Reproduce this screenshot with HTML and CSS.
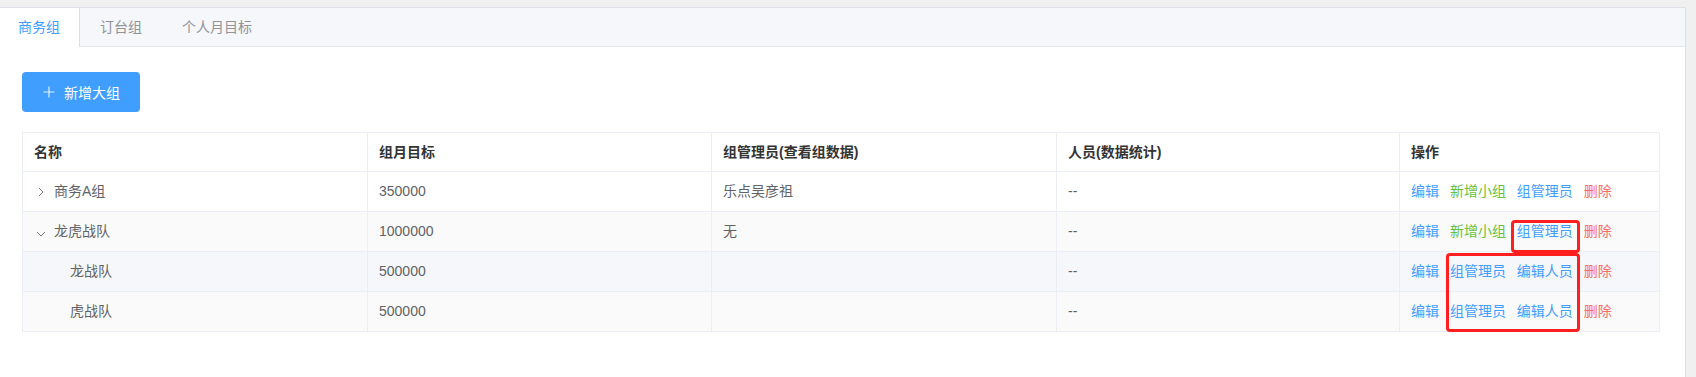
FILE: index.html
```html
<!DOCTYPE html>
<html lang="zh-CN">
<head>
    <meta charset="UTF-8">
    <title>分组管理</title>
    <link rel="stylesheet" href="styles.css">
</head>
<body>
    <div class="card">
        <!-- Tabs -->
        <div class="tabs-header">
            <div class="tab active">商务组</div>
            <div class="tab">订台组</div>
            <div class="tab">个人月目标</div>
        </div>

        <div class="tabs-content">
            <button class="btn-primary">
                <svg class="plus" width="12" height="12" viewBox="0 0 12 12"><path d="M6 0.5V11.5M0.5 6H11.5" stroke="#fff" stroke-width="1.2" fill="none"/></svg>
                <span>新增大组</span>
            </button>

            <!-- Group table -->
            <div class="table-wrap">
                <table class="group-table">
                    <colgroup>
                        <col class="c1"><col class="c2"><col class="c3"><col class="c4"><col class="c5">
                    </colgroup>
                    <thead>
                        <tr>
                            <th>名称</th>
                            <th>组月目标</th>
                            <th>组管理员(查看组数据)</th>
                            <th>人员(数据统计)</th>
                            <th>操作</th>
                        </tr>
                    </thead>
                    <tbody>
                        <tr class="row-white">
                            <td><span class="expand"><svg width="6" height="10" viewBox="0 0 6 10"><polyline points="1,1 5,5 1,9" fill="none" stroke="#777" stroke-width="1"/></svg></span>商务A组</td>
                            <td>350000</td>
                            <td>乐点吴彦祖</td>
                            <td>--</td>
                            <td class="ops">
                                <span class="link blue">编辑</span>
                                <span class="link green">新增小组</span>
                                <span class="link blue">组管理员</span>
                                <span class="link red">删除</span>
                            </td>
                        </tr>
                        <tr class="row-stripe">
                            <td><span class="expand"><svg width="10" height="6" viewBox="0 0 10 6"><polyline points="1,1 5,5 9,1" fill="none" stroke="#777" stroke-width="1"/></svg></span>龙虎战队</td>
                            <td>1000000</td>
                            <td>无</td>
                            <td>--</td>
                            <td class="ops">
                                <span class="link blue">编辑</span>
                                <span class="link green">新增小组</span>
                                <span class="link blue">组管理员</span>
                                <span class="link red">删除</span>
                            </td>
                        </tr>
                        <tr class="row-hover">
                            <td><span class="indent"></span>龙战队</td>
                            <td>500000</td>
                            <td></td>
                            <td>--</td>
                            <td class="ops">
                                <span class="link blue">编辑</span>
                                <span class="link blue">组管理员</span>
                                <span class="link blue">编辑人员</span>
                                <span class="link red">删除</span>
                            </td>
                        </tr>
                        <tr class="row-stripe">
                            <td><span class="indent"></span>虎战队</td>
                            <td>500000</td>
                            <td></td>
                            <td>--</td>
                            <td class="ops">
                                <span class="link blue">编辑</span>
                                <span class="link blue">组管理员</span>
                                <span class="link blue">编辑人员</span>
                                <span class="link red">删除</span>
                            </td>
                        </tr>
                    </tbody>
                </table>

                <!-- red annotation boxes -->
                <div class="mark mark-one"></div>
                <div class="mark mark-two"></div>
            </div>
        </div>
    </div>
</body>
</html>
```

FILE: styles.css
```css
html, body {
    margin: 0;
    padding: 0;
}
body {
    font-family: "Liberation Sans", "Noto Sans CJK SC", sans-serif;
    font-size: 14px;
    background-color: #f0f0f0;
    padding-top: 7px;
    padding-right: 10px;
    overflow: hidden;
}
.card {
    background-color: #fff;
    border: 1px solid #dcdfe6;
    border-bottom: none;
    margin-left: -1px;
    height: 370px;
    box-sizing: border-box;
}

/* tabs */
.tabs-header {
    display: flex;
    background-color: #f5f7fa;
    border-bottom: 1px solid #e4e7ed;
    height: 38px;
}
.tab {
    padding: 0 20px;
    line-height: 38px;
    color: #909399;
    height: 39px;
    box-sizing: border-box;
}
.tab.active {
    background-color: #fff;
    color: #409eff;
    border-right: 1px solid #dcdfe6;
    padding-left: 18px;
    padding-right: 19px;
}
.tab.active + .tab {
    padding-left: 20px;
}

.tabs-content {
    padding: 25px 25px 0 22px;
}

.btn-primary {
    display: flex;
    align-items: center;
    gap: 9px;
    height: 40px;
    padding: 0 20px 0 21px;
    background-color: #409eff;
    color: #fff;
    border: none;
    border-radius: 4px;
    font-family: inherit;
    font-size: 14px;
    cursor: pointer;
}
.btn-primary .plus {
    opacity: 0.85;
}

/* table */
.table-wrap {
    position: relative;
    margin-top: 20px;
    width: 1638px;
}
.group-table {
    width: 1638px;
    table-layout: fixed;
    border-collapse: separate;
    border-spacing: 0;
    border-top: 1px solid #ebeef5;
    border-left: 1px solid #ebeef5;
    color: #606266;
}
.group-table col.c1 { width: 345px; }
.group-table col.c2 { width: 344px; }
.group-table col.c3 { width: 345px; }
.group-table col.c4 { width: 343px; }
.group-table col.c5 { width: 260px; }
.group-table th,
.group-table td {
    border-right: 1px solid #ebeef5;
    border-bottom: 1px solid #ebeef5;
    padding: 0 0 0 11px;
    height: 39px;
    line-height: 39px;
    text-align: left;
    white-space: nowrap;
    overflow: hidden;
}
.group-table th {
    color: #333;
    font-weight: bold;
    height: 38px;
    line-height: 38px;
}
.row-white { background-color: #fff; }
.row-stripe { background-color: #fafafa; }
.row-hover { background-color: #f5f7fa; }

.expand {
    display: inline-flex;
    align-items: center;
    justify-content: center;
    width: 14px;
    height: 14px;
    margin-right: 6px;
    vertical-align: -1px;
}
.indent {
    display: inline-block;
    width: 36px;
}

.ops .link {
    margin-right: 7px;
    cursor: pointer;
}
.blue { color: #409eff; }
.green { color: #67c23a; }
.red { color: #f56c6c; }

.mark {
    position: absolute;
    border: 3px solid #ff1f1f;
    border-radius: 4px;
    box-sizing: border-box;
}
.mark-one {
    left: 1489px;
    top: 88px;
    width: 69px;
    height: 33px;
}
.mark-two {
    left: 1424px;
    top: 121px;
    width: 134px;
    height: 79px;
}
```
